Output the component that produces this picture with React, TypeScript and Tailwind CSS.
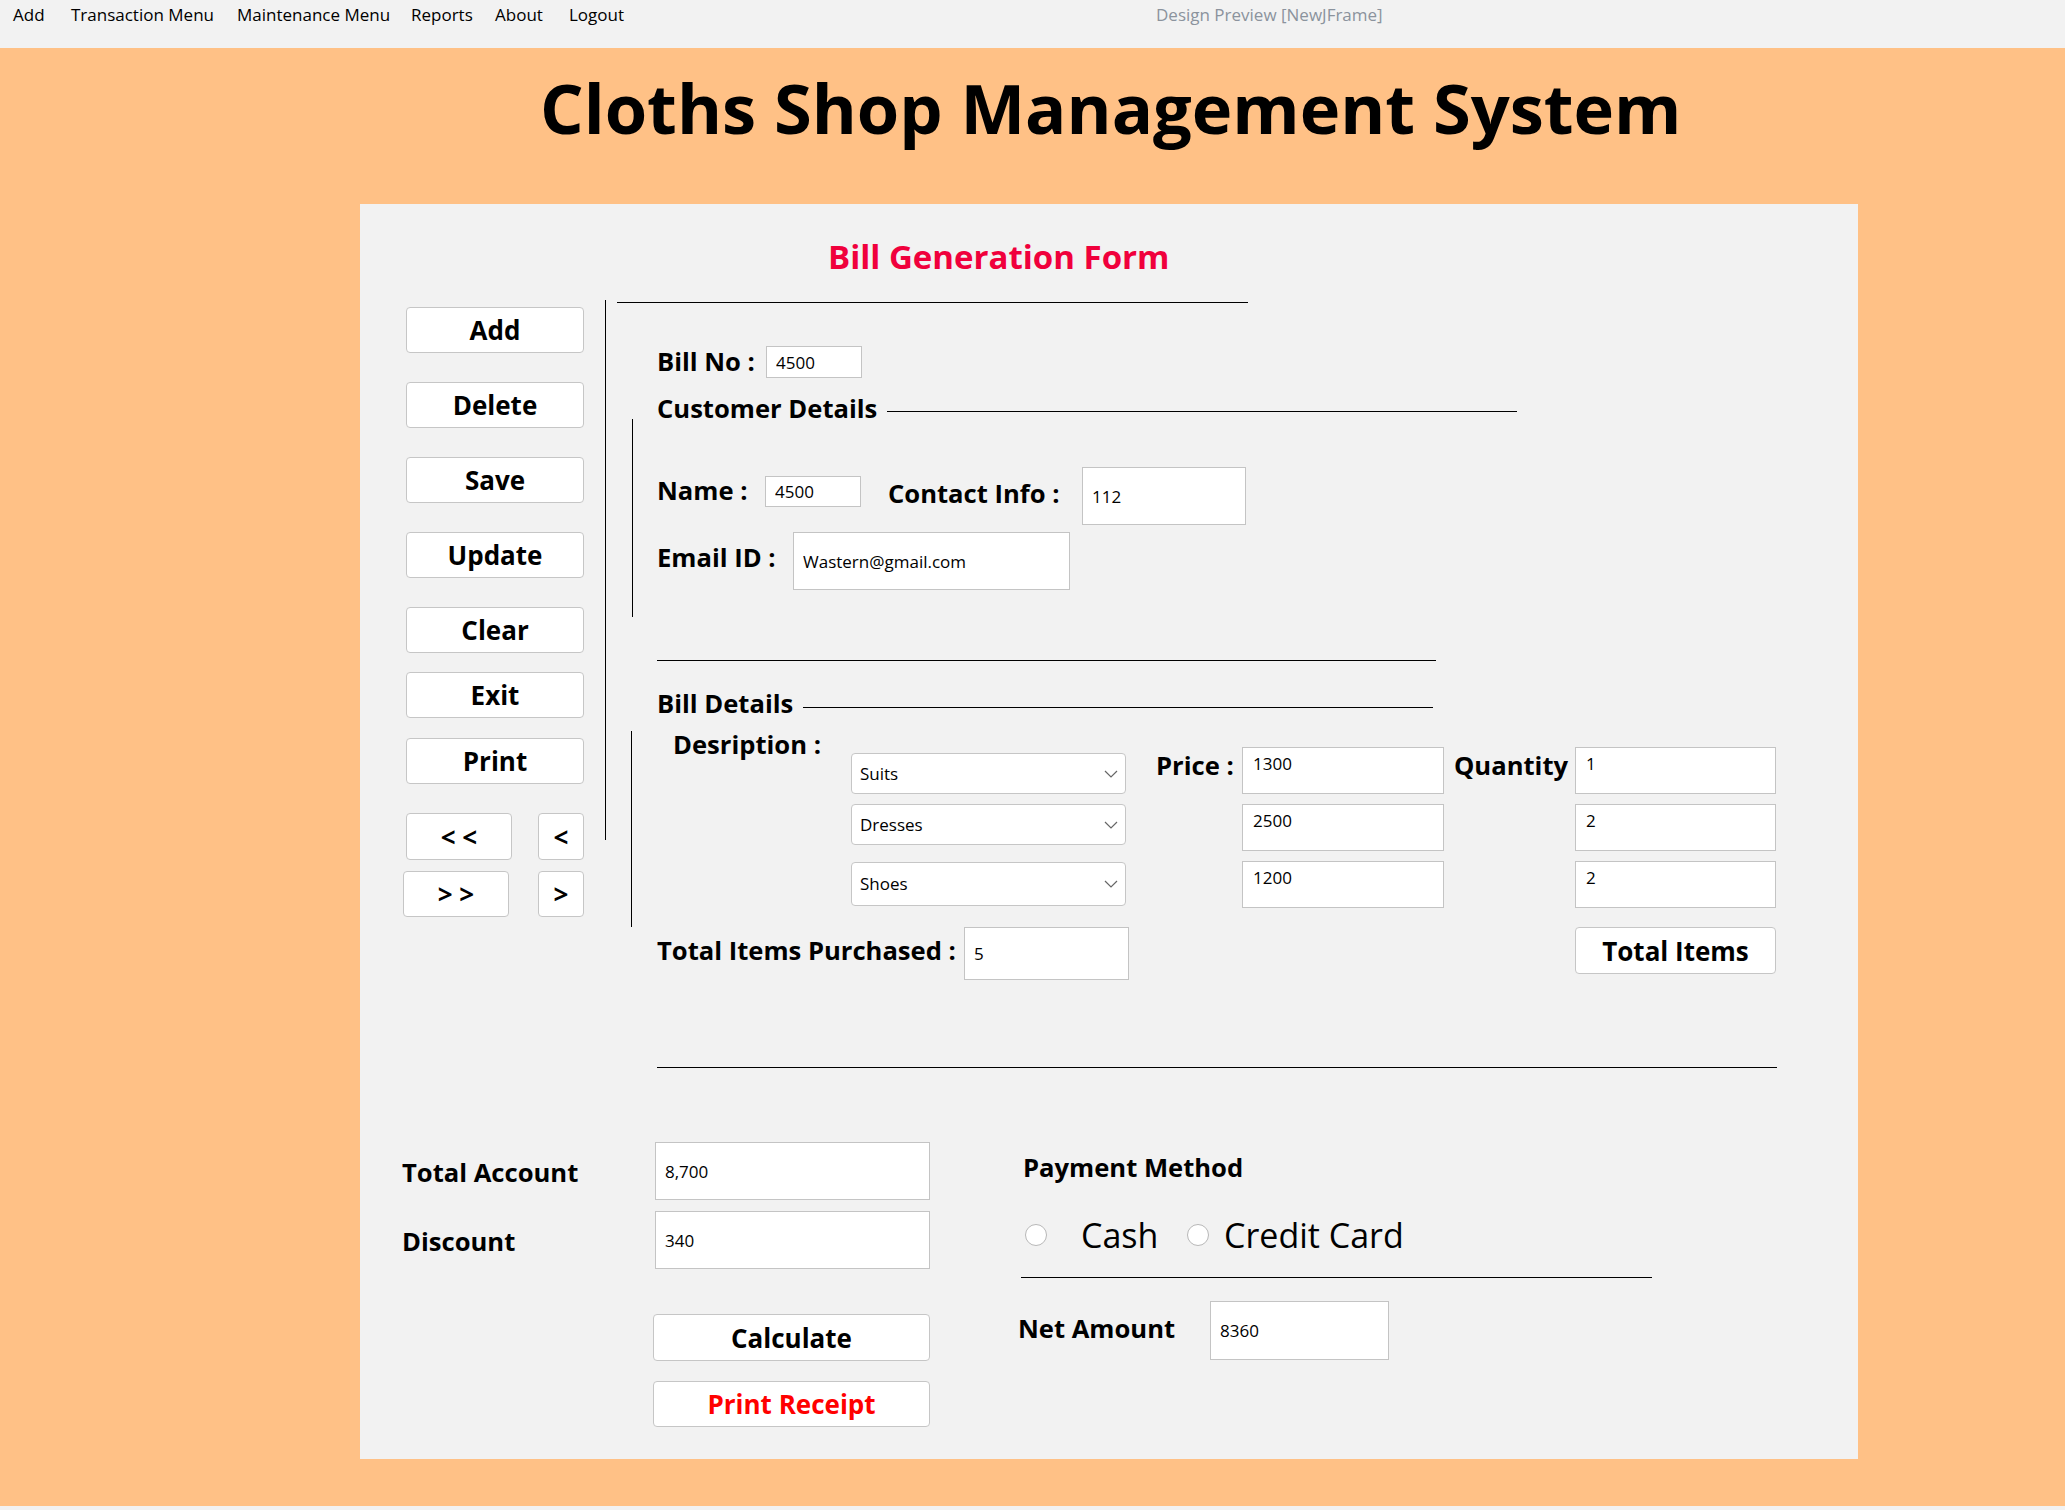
import React from 'react';

const menuItems = [
    { label: 'Add', w: 'w-[58px]' },
    { label: 'Transaction Menu', w: 'w-[166px]' },
    { label: 'Maintenance Menu', w: 'w-[174px]' },
    { label: 'Reports', w: 'w-[84px]' },
    { label: 'About', w: 'w-[74px]' },
    { label: 'Logout', w: 'w-[587px]' },
];

function Btn({ children, className = '', red = false }: { children: React.ReactNode; className?: string; red?: boolean }) {
    return (
        <button
            type="button"
            className={`flex items-center justify-center rounded-[4px] border border-[#c6c6c6] bg-white text-[26px] font-bold leading-none ${red ? 'text-[#ff0000]' : 'text-black'} ${className}`}
        >
            {children}
        </button>
    );
}

function Field({ value, className = '' }: { value: string; className?: string }) {
    return (
        <input
            readOnly
            value={value}
            className={`border border-[#c4c4c4] bg-white pl-[9px] text-[17px] text-black outline-none ${className}`}
        />
    );
}

// price / quantity boxes keep their text at the top, like a text area
function TopField({ value }: { value: string }) {
    return (
        <div className="h-[47px] border border-[#c4c4c4] bg-white pl-[10px] pt-[5px] text-[17px] leading-[22px]">
            {value}
        </div>
    );
}

function Combo({ value, className = '' }: { value: string; className?: string }) {
    return (
        <div className={`flex items-center justify-between rounded-[4px] border border-[#c6c6c6] bg-white pl-[8px] pr-[7px] text-[17px] ${className}`}>
            <span>{value}</span>
            <svg width="14" height="8" viewBox="0 0 14 8" fill="none">
                <polyline points="1,1 7,7 13,1" stroke="#666" strokeWidth="1.2" />
            </svg>
        </div>
    );
}

function Radio() {
    return <div className="h-[22px] w-[22px] rounded-full border border-[#b8b8b8] bg-white" />;
}

const label = 'text-[25.6px] font-bold leading-[24px] whitespace-nowrap';

export default function App() {
    return (
        <div className="flex h-[1510px] w-[2065px] flex-col bg-[#f2f2f2] font-['Open_Sans',sans-serif] text-black">
            {/* menu bar */}
            <div className="flex h-[48px] items-start pl-[13px] pt-[3px] text-[17px] leading-[24px]">
                {menuItems.map((m) => (
                    <span key={m.label} className={`${m.w} whitespace-nowrap`}>
                        {m.label}
                    </span>
                ))}
                <span className="whitespace-nowrap text-[#8b939d]">Design Preview [NewJFrame]</span>
            </div>

            <div className="flex h-[1458px] flex-col bg-[#ffc186]">
                <div className="h-[156px] pl-[540px] pt-[26px]">
                    <h1 className="whitespace-nowrap text-[68.6px] font-bold leading-[68px]">Cloths Shop Management System</h1>
                </div>

                <div className="ml-[360px] flex h-[1255px] w-[1498px] flex-col bg-[#f2f2f2]">
                    <div className="h-[96px] pl-[468px] pt-[33px]">
                        <h2 className="whitespace-nowrap text-[33px] font-bold leading-[40px] text-[#f0003c]">Bill Generation Form</h2>
                    </div>

                    <div className="flex items-start">
                        {/* action buttons */}
                        <div className="flex w-[245px] flex-col pl-[46px] pt-[7px]">
                            <Btn className="h-[46px] w-[178px]">Add</Btn>
                            <Btn className="mt-[29px] h-[46px] w-[178px]">Delete</Btn>
                            <Btn className="mt-[29px] h-[46px] w-[178px]">Save</Btn>
                            <Btn className="mt-[29px] h-[46px] w-[178px]">Update</Btn>
                            <Btn className="mt-[29px] h-[46px] w-[178px]">Clear</Btn>
                            <Btn className="mt-[19px] h-[46px] w-[178px]">Exit</Btn>
                            <Btn className="mt-[20px] h-[46px] w-[178px]">Print</Btn>
                            <div className="mt-[29px] flex">
                                <Btn className="h-[47px] w-[106px] text-[24px]">&lt; &lt;</Btn>
                                <Btn className="ml-[26px] h-[47px] w-[46px] text-[24px]">&lt;</Btn>
                            </div>
                            <div className="mt-[11px] flex">
                                <Btn className="ml-[-3px] h-[46px] w-[106px] text-[24px]">&gt; &gt;</Btn>
                                <Btn className="ml-[29px] h-[46px] w-[46px] text-[24px]">&gt;</Btn>
                            </div>
                        </div>

                        <div className="h-[540px] w-px bg-black" />

                        <div className="flex flex-col">
                            <div className="ml-[11px] mt-[2px] h-px w-[631px] bg-black" />

                            <div className="mt-[43px] flex h-[32px] items-center">
                                <span className={`ml-[51px] w-[109px] ${label}`}>Bill No :</span>
                                <Field value="4500" className="h-[32px] w-[96px]" />
                            </div>

                            <div className="mt-[21px] flex h-[20px] items-center">
                                <span className={`ml-[51px] w-[230px] ${label}`}>Customer Details</span>
                                <div className="mt-[4px] h-px w-[630px] bg-black" />
                            </div>

                            <div className="flex items-start">
                                <div className="ml-[26px] h-[198px] w-px bg-black" />
                                <div className="ml-[24px] flex flex-col">
                                    <div className="mt-[48px] flex h-[58px] items-center">
                                        <span className={`mb-[10px] w-[108px] ${label}`}>Name :</span>
                                        <Field value="4500" className="mb-[10px] h-[31px] w-[96px]" />
                                        <span className={`mb-[4px] ml-[27px] w-[194px] ${label}`}>Contact Info :</span>
                                        <Field value="112" className="h-[58px] w-[164px]" />
                                    </div>
                                    <div className="mt-[7px] flex h-[58px] items-center">
                                        <span className={`mb-[6px] w-[136px] ${label}`}>Email ID :</span>
                                        <Field value="Wastern@gmail.com" className="h-[58px] w-[277px]" />
                                    </div>
                                </div>
                            </div>

                            <div className="ml-[51px] mt-[43px] h-px w-[779px] bg-black" />

                            <div className="mt-[33px] flex h-[20px] items-center">
                                <span className={`ml-[51px] w-[146px] ${label}`}>Bill Details</span>
                                <div className="mt-[6px] h-px w-[630px] bg-black" />
                            </div>

                            <div className="mt-[17px] flex items-start">
                                <div className="ml-[25px] h-[196px] w-px bg-black" />
                                <div className={`ml-[41px] mt-[2px] h-[24px] w-[178px] ${label}`}>Desription :</div>
                                <div className="flex w-[275px] flex-col">
                                    <Combo value="Suits" className="mt-[22px] h-[41px]" />
                                    <Combo value="Dresses" className="mt-[10px] h-[41px]" />
                                    <Combo value="Shoes" className="mt-[17px] h-[44px]" />
                                </div>
                                <div className={`ml-[30px] mt-[23px] h-[24px] w-[86px] ${label}`}>Price :</div>
                                <div className="mt-[16px] flex w-[202px] flex-col gap-[10px]">
                                    <TopField value="1300" />
                                    <TopField value="2500" />
                                    <TopField value="1200" />
                                </div>
                                <div className={`ml-[10px] mt-[23px] h-[24px] w-[121px] ${label}`}>Quantity</div>
                                <div className="mt-[16px] flex w-[201px] flex-col gap-[10px]">
                                    <TopField value="1" />
                                    <TopField value="2" />
                                    <TopField value="2" />
                                </div>
                            </div>

                            <div className="flex items-start">
                                <div className={`ml-[51px] flex h-[53px] w-[307px] items-center pb-[6px] ${label}`}>Total Items Purchased :</div>
                                <Field value="5" className="h-[53px] w-[165px]" />
                                <Btn className="ml-[446px] h-[47px] w-[201px]">Total Items</Btn>
                            </div>

                            <div className="ml-[51px] mt-[87px] h-px w-[1120px] bg-black" />
                        </div>
                    </div>

                    {/* totals and payment */}
                    <div className="flex items-start pl-[42px]">
                        <div className="flex w-[528px] flex-col">
                            <div className="mt-[74px] flex h-[58px] items-center">
                                <span className={`mt-[4px] w-[253px] ${label}`}>Total Account</span>
                                <Field value="8,700" className="h-[58px] w-[275px]" />
                            </div>
                            <div className="mt-[11px] flex h-[58px] items-center">
                                <span className={`mt-[4px] w-[253px] ${label}`}>Discount</span>
                                <Field value="340" className="h-[58px] w-[275px]" />
                            </div>
                            <Btn className="ml-[251px] mt-[45px] h-[47px] w-[277px]">Calculate</Btn>
                            <Btn red className="ml-[251px] mt-[20px] h-[46px] w-[277px]">Print Receipt</Btn>
                        </div>

                        <div className="ml-[88px] flex flex-col">
                            <div className={`ml-[5px] mt-[88px] h-[24px] ${label}`}>Payment Method</div>
                            <div className="mt-[35px] flex h-[40px] items-center">
                                <div className="ml-[7px]">
                                    <Radio />
                                </div>
                                <span className="ml-[34px] w-[106px] text-[34px] leading-[40px]">Cash</span>
                                <Radio />
                                <span className="ml-[15px] whitespace-nowrap text-[34px] leading-[40px]">Credit Card</span>
                            </div>
                            <div className="ml-[3px] mt-[22px] h-px w-[631px] bg-black" />
                            <div className="mt-[23px] flex h-[59px] items-center">
                                <span className={`mb-[4px] w-[192px] ${label}`}>Net Amount</span>
                                <Field value="8360" className="h-[59px] w-[179px]" />
                            </div>
                        </div>
                    </div>
                </div>
            </div>
        </div>
    );
}
